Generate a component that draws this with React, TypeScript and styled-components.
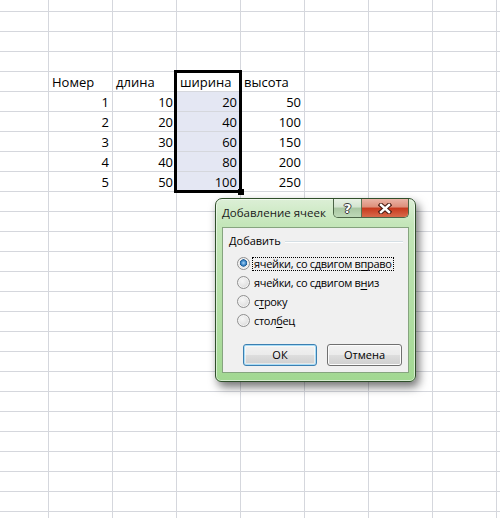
import React from "react";
import styled, { createGlobalStyle } from "styled-components";

const GlobalStyle = createGlobalStyle`
  html, body {
    margin: 0;
    padding: 0;
    background: #ffffff;
    overflow: hidden;
  }
`;

const ROWS = 27;
const COLS = 9;

const header = ["Номер", "длина", "ширина", "высота"];
const values = [
  [1, 10, 20, 50],
  [2, 20, 40, 100],
  [3, 30, 60, 150],
  [4, 40, 80, 200],
  [5, 50, 100, 250],
];

const options = [
  { before: "ячейки, со сдвигом в", key: "п", after: "раво", checked: true },
  { before: "ячейки, со сдвигом в", key: "н", after: "из", checked: false },
  { before: "с", key: "т", after: "року", checked: false },
  { before: "стол", key: "б", after: "ец", checked: false },
];

const cellText = (row: number, col: number) => {
  if (col < 1 || col > 4) return null;
  if (row === 4) return { text: header[col - 1], right: false };
  if (row >= 5 && row <= 9) return { text: String(values[row - 5][col - 1]), right: true };
  return null;
};

const CloseGlyph = () => (
  <svg width="14" height="11" viewBox="0 0 14 11">
    <path d="M3 2 L11 9 M11 2 L3 9" stroke="#4a1d14" strokeWidth="4.6" strokeLinecap="square" fill="none" />
    <path d="M3 2 L11 9 M11 2 L3 9" stroke="#ffffff" strokeWidth="2.4" strokeLinecap="square" fill="none" />
  </svg>
);

const App = () => {
  const cells = [];
  for (let r = 0; r < ROWS; r++) {
    for (let c = 0; c < COLS; c++) {
      const t = cellText(r, c);
      cells.push(
        <Cell key={`${r}-${c}`} $right={!!t?.right} $selected={c === 3 && r >= 5 && r <= 9}>
          {t?.text}
        </Cell>
      );
    }
  }

  return (
    <>
      <GlobalStyle />
      <Sheet>
        <Grid>{cells}</Grid>
        <Selection>
          <FillHandle />
        </Selection>
        <Dialog>
          <TitleBar>
            <Title>Добавление ячеек</Title>
            <CaptionButtons>
              <HelpButton>?</HelpButton>
              <CloseButton>
                <CloseGlyph />
              </CloseButton>
            </CaptionButtons>
          </TitleBar>
          <Client>
            <GroupHeader>
              <GroupLabel>Добавить</GroupLabel>
              <GroupLine />
            </GroupHeader>
            <Options>
              {options.map((o, i) => (
                <RadioRow key={i}>
                  <Radio $checked={o.checked} />
                  <RadioLabel $focused={o.checked}>
                    {o.before}
                    <u>{o.key}</u>
                    {o.after}
                  </RadioLabel>
                </RadioRow>
              ))}
            </Options>
            <ButtonRow>
              <DialogButton $default>ОК</DialogButton>
              <DialogButton $wide>Отмена</DialogButton>
            </ButtonRow>
          </Client>
        </Dialog>
      </Sheet>
    </>
  );
};

export default App;

const Sheet = styled.div`
  position: relative;
  width: 500px;
  height: 518px;
  overflow: hidden;
  background: #ffffff;
`;

const Grid = styled.div`
  display: grid;
  grid-template-columns: 49px repeat(7, 64px) 1fr;
  grid-template-rows: 12px;
  grid-auto-rows: 20px;
  font-family: "Open Sans", "Liberation Sans", sans-serif;
  font-size: 13px;
  color: #000000;
`;

const Cell = styled.div<{ $right: boolean; $selected: boolean }>`
  box-sizing: border-box;
  border-right: 1px solid #d5d7dd;
  border-bottom: 1px solid #d5d7dd;
  background: ${(p) => (p.$selected ? "#e4e7f3" : "#ffffff")};
  display: flex;
  align-items: flex-end;
  justify-content: ${(p) => (p.$right ? "flex-end" : "flex-start")};
  padding: 0 3px 1px 3px;
  line-height: 16px;
  white-space: nowrap;
  overflow: visible;
`;

const Selection = styled.div`
  position: absolute;
  left: 174px;
  top: 70px;
  width: 68px;
  height: 123px;
  box-sizing: border-box;
  border: 3px solid #000000;
`;

const FillHandle = styled.div`
  position: absolute;
  right: -5px;
  bottom: -5px;
  width: 6px;
  height: 6px;
  background: #000000;
`;

const Dialog = styled.div`
  position: absolute;
  left: 215px;
  top: 198px;
  width: 201px;
  height: 184px;
  box-sizing: border-box;
  border: 1px solid #2f4f2a;
  border-radius: 7px 7px 6px 6px;
  padding: 0 6px 8px 6px;
  background: linear-gradient(180deg, #dcefd6 0%, #c4e6b9 14%, #b2dea4 60%, #a2d892 100%);
  box-shadow: inset 0 0 0 1px rgba(255, 255, 255, 0.55), 3px 5px 10px rgba(0, 0, 0, 0.55);
  display: flex;
  flex-direction: column;
  font-family: "Open Sans", "Noto Sans", sans-serif;
  font-size: 11px;
  color: #000000;
`;

const TitleBar = styled.div`
  height: 28px;
  display: flex;
  justify-content: space-between;
  align-items: flex-start;
`;

const Title = styled.div`
  padding-top: 6px;
  line-height: 16px;
  font-size: 11.5px;
  color: #1a1a1a;
  white-space: nowrap;
`;

const CaptionButtons = styled.div`
  display: flex;
  height: 19px;
  border: 1px solid #4c6547;
  border-top: none;
  border-radius: 0 0 5px 5px;
  overflow: hidden;
  box-sizing: border-box;
`;

const CaptionButton = styled.div`
  height: 100%;
  display: flex;
  align-items: center;
  justify-content: center;
  font-family: "DejaVu Sans", sans-serif;
  font-weight: bold;
  color: #ffffff;
  box-sizing: border-box;
  text-shadow: 1px 0 0 #3a3a3a, -1px 0 0 #3a3a3a, 0 1px 0 #3a3a3a, 0 -1px 0 #3a3a3a;
`;

const HelpButton = styled(CaptionButton)`
  width: 28px;
  font-size: 13px;
  border-right: 1px solid #5a7355;
  background: linear-gradient(180deg, #e8f1e5 0%, #d3e4cf 45%, #a9c6a2 50%, #bed9b7 100%);
`;

const CloseButton = styled(CaptionButton)`
  width: 46px;
  background: linear-gradient(180deg, #eab3a6 0%, #dd8f7a 45%, #c7391d 50%, #d86a4b 100%);
`;

const Client = styled.div`
  height: 146px;
  box-sizing: border-box;
  border: 1px solid #86a47f;
  background: #f0f0f0;
  padding: 5px 5px 0 6px;
  display: flex;
  flex-direction: column;
`;

const GroupHeader = styled.div`
  display: flex;
  align-items: center;
  gap: 4px;
  height: 16px;
  line-height: 16px;
`;

const GroupLabel = styled.span`
  white-space: nowrap;
`;

const GroupLine = styled.div`
  flex: 1;
  height: 1px;
  background: #d5dfe5;
  box-shadow: 0 1px 0 #ffffff;
`;

const Options = styled.div`
  display: flex;
  flex-direction: column;
  margin-top: 5px;
  padding-left: 8px;
`;

const RadioRow = styled.div`
  height: 19px;
  display: flex;
  align-items: center;
  gap: 2px;
`;

const Radio = styled.div<{ $checked: boolean }>`
  width: 13px;
  height: 13px;
  box-sizing: border-box;
  border-radius: 50%;
  border: 1px solid #8f8f8f;
  flex-shrink: 0;
  background: ${(p) =>
    p.$checked
      ? "radial-gradient(circle at 50% 45%, #a9d3f5 0%, #3c87c8 28%, #1f5c95 42%, #e6e6e6 48%, #f7f7f7 100%)"
      : "radial-gradient(circle at 40% 35%, #f7f7f7 0%, #e6e6e6 50%, #cfcfcf 100%)"};
  box-shadow: inset 0 0 0 1px #f4f4f4;
`;

const RadioLabel = styled.span<{ $focused: boolean }>`
  display: inline-block;
  line-height: 12px;
  padding: 0 1px;
  letter-spacing: -0.3px;
  border: 1px dotted ${(p) => (p.$focused ? "#000000" : "transparent")};
  white-space: nowrap;

  u {
    text-decoration-thickness: 1px;
    text-underline-offset: 2px;
  }
`;

const ButtonRow = styled.div`
  display: flex;
  gap: 10px;
  margin-top: 14px;
  padding-left: 14px;
`;

const DialogButton = styled.div<{ $default?: boolean; $wide?: boolean }>`
  width: ${(p) => (p.$wide ? "75px" : "74px")};
  height: 22px;
  box-sizing: border-box;
  border-radius: 3px;
  border: 1px solid ${(p) => (p.$default ? "#3c7fb1" : "#707070")};
  background: linear-gradient(180deg, #f2f2f2 0%, #ebebeb 48%, #dddddd 52%, #cfcfcf 100%);
  box-shadow: ${(p) =>
    p.$default ? "inset 0 0 0 1px #a8dcf6, inset 0 0 0 2px rgba(255,255,255,0.5)" : "inset 0 0 0 1px #fcfcfc"};
  display: flex;
  align-items: center;
  justify-content: center;
  line-height: 16px;
`;
